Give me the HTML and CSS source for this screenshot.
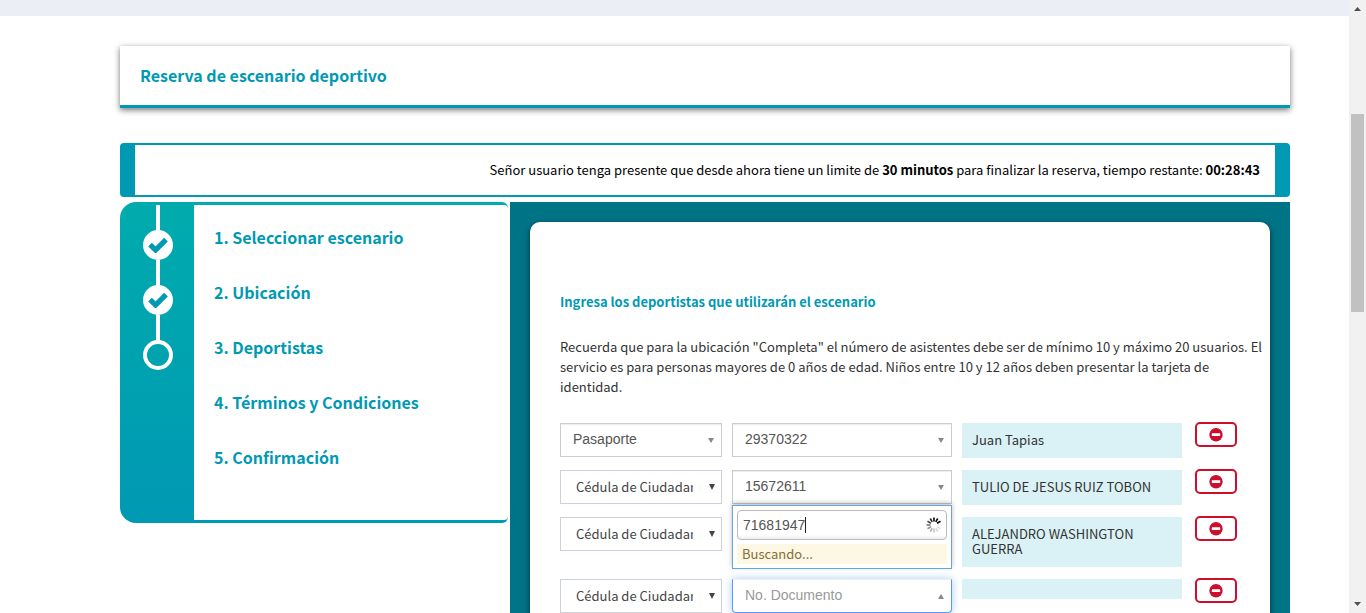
FILE: index.html
```html
<!DOCTYPE html>
<html lang="es">
<head>
<meta charset="utf-8">
<meta name="viewport" content="width=device-width, initial-scale=1">
<title>Reserva de escenario deportivo</title>
<link rel="stylesheet" href="styles.css">
</head>
<body>
<svg class="defs" aria-hidden="true">
  <symbol id="check" viewBox="0 0 20 16"><path d="M2 7.600 7.600 13 18 2.600" fill="none" stroke="currentColor" stroke-width="5.2"/></symbol>
  <symbol id="minus" viewBox="0 0 14 14"><circle cx="7" cy="6.700" r="6.700" fill="currentColor"/><rect x="2.800" y="5.200" width="8.400" height="2.800" rx=".4" fill="#fff"/></symbol>
</svg>
<div class="shell">
  <div class="page">
    <div class="topbar"></div>
    <main class="container">
      <header class="title-card"><h1>Reserva de escenario deportivo</h1></header>
      <p class="notice">Señor usuario tenga presente que desde ahora tiene un limite de <strong>30 minutos</strong> para finalizar la reserva, tiempo restante: <strong>00:28:43</strong></p>
      <div class="columns">
        <nav class="wizard" aria-label="Pasos">
          <ol class="steps">
            <li class="step reached"><span class="rail"><span class="dot done"><svg class="check"><use href="#check"/></svg></span></span><span class="step-name">1. Seleccionar escenario</span></li>
            <li class="step reached"><span class="rail"><span class="dot done"><svg class="check"><use href="#check"/></svg></span></span><span class="step-name">2. Ubicación</span></li>
            <li class="step reached"><span class="rail"><span class="dot"></span></span><span class="step-name">3. Deportistas</span></li>
            <li class="step"><span class="rail"></span><span class="step-name">4. Términos y Condiciones</span></li>
            <li class="step"><span class="rail"></span><span class="step-name">5. Confirmación</span></li>
          </ol>
        </nav>
        <section class="panel">
          <form class="form-card">
            <h2>Ingresa los deportistas que utilizarán el escenario</h2>
            <p class="help">Recuerda que para la ubicación "Completa" el número de asistentes debe ser de mínimo 10 y máximo 20 usuarios. El<br>servicio es para personas mayores de 0 años de edad. Niños entre 10 y 12 años deben presentar la tarjeta de<br>identidad.</p>
            <div class="athlete">
              <select class="picker" aria-label="Tipo de documento"><option>Pasaporte</option></select>
              <select class="picker" aria-label="No. Documento"><option>29370322</option></select>
              <output class="name">Juan Tapias</output>
              <button class="remove" type="button" aria-label="Eliminar"><svg class="minus"><use href="#minus"/></svg></button>
            </div>
            <div class="athlete">
              <select class="plain" aria-label="Tipo de documento"><option>Cédula de Ciudadanía</option></select>
              <select class="picker" aria-label="No. Documento"><option>15672611</option></select>
              <output class="name">TULIO DE JESUS RUIZ TOBON</output>
              <button class="remove" type="button" aria-label="Eliminar"><svg class="minus"><use href="#minus"/></svg></button>
            </div>
            <div class="athlete">
              <select class="plain" aria-label="Tipo de documento"><option>Cédula de Ciudadanía</option></select>
              <select class="picker" aria-label="No. Documento"><option></option></select>
              <output class="name">ALEJANDRO WASHINGTON GUERRA</output>
              <button class="remove" type="button" aria-label="Eliminar"><svg class="minus"><use href="#minus"/></svg></button>
            </div>
            <div class="athlete">
              <select class="plain" aria-label="Tipo de documento"><option>Cédula de Ciudadanía</option></select>
              <div class="document">
                <select class="picker open" aria-label="No. Documento"><option>No. Documento</option></select>
                <div class="dropdown">
                  <div class="search">
                    <input type="text" value="71681947" aria-label="Buscar documento">
                    <svg class="spinner" viewBox="-8 -8 16 16" stroke="#000" stroke-width="1.6">
                      <path d="M0-3.5V-7.5"/>
                      <path d="M0-3.5V-7.5" transform="rotate(30)"/>
                      <path d="M0-3.5V-7.5" transform="rotate(60)"/>
                      <path d="M0-3.5V-7.5" transform="rotate(90)" opacity=".06"/>
                      <path d="M0-3.5V-7.5" transform="rotate(120)" opacity=".12"/>
                      <path d="M0-3.5V-7.5" transform="rotate(150)" opacity=".16"/>
                      <path d="M0-3.5V-7.5" transform="rotate(180)" opacity=".22"/>
                      <path d="M0-3.5V-7.5" transform="rotate(210)" opacity=".32"/>
                      <path d="M0-3.5V-7.5" transform="rotate(240)" opacity=".42"/>
                      <path d="M0-3.5V-7.5" transform="rotate(270)" opacity=".55"/>
                      <path d="M0-3.5V-7.5" transform="rotate(300)" opacity=".7"/>
                      <path d="M0-3.5V-7.5" transform="rotate(330)" opacity=".85"/>
                    </svg>
                    <span class="caret"></span>
                  </div>
                  <div class="searching">Buscando...</div>
                </div>
              </div>
              <output class="name"></output>
              <button class="remove" type="button" aria-label="Eliminar"><svg class="minus"><use href="#minus"/></svg></button>
            </div>
          </form>
        </section>
      </div>
    </main>
  </div>
  <div class="scrollbar" aria-hidden="true">
    <svg class="arrow" viewBox="0 0 17 17"><path d="M5 11h7L8.500 7z" fill="#505050"/></svg>
    <div class="track"><div class="thumb"></div></div>
    <svg class="arrow" viewBox="0 0 17 17"><path d="M5 6h7L8.500 10z" fill="#505050"/></svg>
  </div>
</div>
</body>
</html>
```
FILE: styles.css
```css
* { box-sizing: border-box; }

body {
  margin: 0;
  background: #fff;
  color: #333;
  font: 13px/20px "Noto Sans CJK SC", "Source Sans Pro", sans-serif;
}

h1, h2, p, ol { margin: 0; padding: 0; }

.defs { display: none; }

.shell {
  display: flex;
  height: 100vh;
  overflow: hidden;
}

.page { flex: 1; min-width: 0; overflow: hidden; }

.topbar { height: 16px; background: #ebeef4; }

.container { padding: 30px 59px 0 120px; }

.title-card {
  padding: 17px 20px 18px;
  border-bottom: 3px solid #0099b3;
  box-shadow: 0 2px 6px rgba(0, 0, 0, .55);
}

.title-card h1 {
  color: #0099b3;
  font-size: 16px;
  line-height: 24px;
}

.notice {
  margin-top: 35px;
  padding: 15px;
  border: 2px solid #0099b3;
  border-width: 2px 15px;
  border-radius: 4px;
  color: #000;
  text-align: right;
}

.columns {
  display: grid;
  grid-template-columns: 1fr 2fr;
  align-items: start;
  margin-top: 5px;
}

.wizard {
  margin-right: 2px;
  padding: 3px 0;
  border-radius: 16px 6px 6px 16px;
  background: linear-gradient(#00abad, #0099b3);
}

.steps {
  padding-bottom: 40px;
  border-radius: 0 4px 4px 0;
  background: linear-gradient(#fff, #fff) 74px 0 no-repeat;
  list-style: none;
}

.step { display: flex; height: 55px; }

.rail {
  display: flex;
  flex: none;
  flex-direction: column;
  align-items: center;
  width: 74px;
  padding-left: 2px;
}

.reached .rail::before {
  content: "";
  flex: 1;
  width: 4px;
  background: #fff;
}

.dot {
  display: flex;
  align-items: center;
  justify-content: center;
  width: 30px;
  height: 30px;
  border: 4px solid #fff;
  border-radius: 50%;
}

.done { background: #fff; color: #0099b3; }

.check { flex: none; width: 20px; height: 16px; }

.step-name {
  padding: 20px 20px 0;
  color: #0099b3;
  font-size: 16px;
  font-weight: bold;
  line-height: 24px;
}

.panel { padding: 20px; background: #007487; }

.form-card {
  padding: 70px 30px 30px;
  border-radius: 10px;
  background: #fff;
  box-shadow: 0 2px 6px rgba(0, 0, 0, .55);
}

.form-card h2 {
  color: #0099b3;
  font-size: 13px;
  line-height: 20px;
}

.help { margin: 25px -30px 26px 0; }

.athlete {
  display: grid;
  grid-template-columns: 162fr 220fr 220fr 48fr;
  align-items: start;
  gap: 10px;
  margin-bottom: 12px;
}

select {
  width: 100%;
  height: 34px;
  border: 1px solid #cdd0de;
  border-radius: 0;
  color: #444;
  background: #fff no-repeat right 6px center;
  appearance: none;
}

.plain {
  padding: 0 28px 0 15px;
  font: inherit;
  background-image: url("data:image/svg+xml,%3Csvg xmlns='http://www.w3.org/2000/svg' width='6' height='7'%3E%3Cpath d='M0 0h6L3 6z' fill='%23444'/%3E%3C/svg%3E");
}

.picker {
  padding: 0 25px 2px 12px;
  border-color: #ccc;
  color: #555;
  font: 14px "Liberation Sans", Arial, sans-serif;
  background-image: url("data:image/svg+xml,%3Csvg xmlns='http://www.w3.org/2000/svg' width='7' height='5'%3E%3Cpath d='M0 0h6L3 5z' fill='%23888'/%3E%3C/svg%3E");
  box-shadow: inset 0 1px 1px rgba(0, 0, 0, .075);
}

.document { position: relative; }

.open {
  display: block;
  border-color: #f0f0f0 #5897fb #5897fb;
  border-radius: 0 0 4px 4px;
  color: #999;
  background-image: url("data:image/svg+xml,%3Csvg xmlns='http://www.w3.org/2000/svg' width='7' height='5'%3E%3Cpath d='M0 5h6L3 0z' fill='%23888'/%3E%3C/svg%3E");
  box-shadow: 0 0 8px rgba(102, 175, 233, .6);
}

.dropdown {
  position: absolute;
  right: 0;
  bottom: calc(100% + 10px);
  left: 0;
  padding: 4px;
  border: 1px solid #66a3e0;
  background: #fff;
  box-shadow: 0 -2px 5px rgba(0, 0, 0, .25);
}

.search { position: relative; }

.search input {
  display: block;
  width: 100%;
  height: 30px;
  padding: 0 28px 0 5px;
  border: 1px solid #bbb;
  border-radius: 4px;
  color: #555;
  background: linear-gradient(#fff 85%, #eee);
  font: 14px "Liberation Sans", Arial, sans-serif;
}

.caret {
  position: absolute;
  top: 7px;
  left: 68px;
  width: 1px;
  height: 16px;
  background: #222;
}

.spinner {
  position: absolute;
  top: 7px;
  right: 5px;
  width: 16px;
  height: 16px;
}

.searching {
  margin-top: 4px;
  padding: 0 5px;
  background: #fcf8e3;
  color: #8a6d3b;
}

.name {
  display: block;
  min-height: 20px;
  padding: 9px 10px 11px;
  background: #daf2f6;
  line-height: 15px;
}

.remove {
  display: flex;
  align-items: center;
  justify-content: center;
  justify-self: center;
  width: 42px;
  height: 25px;
  margin-top: -1px;
  padding: 0;
  border: 2px solid #ce0e2d;
  border-radius: 5px;
  background: #fff;
  color: #ce0e2d;
}

.minus { width: 14px; height: 14px; }

.scrollbar {
  display: flex;
  flex: none;
  flex-direction: column;
  width: 17px;
  background: #f1f1f1;
}

.arrow { display: block; width: 17px; height: 17px; }

.track { flex: 1; padding-top: 97px; }

.thumb { height: 198px; margin: 0 2px; background: #c1c1c1; }
```
